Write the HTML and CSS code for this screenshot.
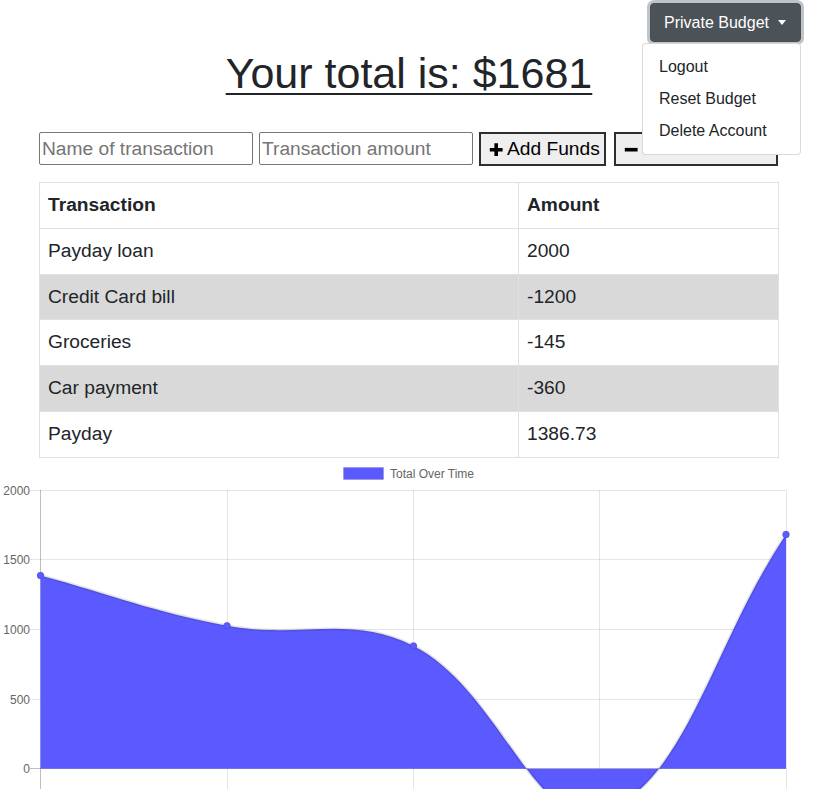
FILE: index.html
```html
<!DOCTYPE html>
<html lang="en">
<head>
<meta charset="utf-8">
<title>Budget Tracker</title>
<link rel="stylesheet" href="styles.css">
</head>
<body>
<nav class="navbar">
  <div class="dropdown">
    <button class="menu-btn" type="button">Private Budget<span class="caret"></span></button>
    <div class="dropdown-menu">
      <a class="dropdown-item" href="#">Logout</a>
      <a class="dropdown-item" href="#">Reset Budget</a>
      <a class="dropdown-item" href="#">Delete Account</a>
    </div>
  </div>
</nav>
<main class="container">
  <h1 class="total"><span class="total-text">Your total is: $1681</span></h1>
  <form class="entry">
    <input class="field" type="text" placeholder="Name of transaction">
    <input class="field" type="text" placeholder="Transaction amount">
    <button class="act-btn" type="button"><svg class="ico" viewBox="0 0 16 16"><path d="M7.4 2.3h3.6v4.6h4.6v3.6H11v4.6H7.4v-4.6H2.8V6.9h4.6z"/></svg>Add Funds</button>
    <button class="act-btn" type="button"><svg class="ico" viewBox="0 0 16 16"><path d="M2.8 6.9h12.8v3.6H2.8z"/></svg>Subtract Funds</button>
  </form>
  <table class="tx">
    <colgroup><col class="c1"><col class="c2"></colgroup>
    <thead>
      <tr><th>Transaction</th><th>Amount</th></tr>
    </thead>
    <tbody>
      <tr><td>Payday loan</td><td>2000</td></tr>
      <tr><td>Credit Card bill</td><td>-1200</td></tr>
      <tr><td>Groceries</td><td>-145</td></tr>
      <tr><td>Car payment</td><td>-360</td></tr>
      <tr><td>Payday</td><td>1386.73</td></tr>
    </tbody>
  </table>
</main>
<svg class="chart" width="819" height="331" viewBox="0 458 819 331">
  <rect x="343.5" y="467.5" width="40" height="12" fill="#5a5aff" stroke="rgba(0,0,0,0.1)"/>
  <text class="lbl" x="390" y="478">Total Over Time</text>
  <g stroke="rgba(0,0,0,0.1)" stroke-width="1">
    <line x1="30" y1="490.5" x2="786" y2="490.5"/>
    <line x1="30" y1="559.5" x2="786" y2="559.5"/>
    <line x1="30" y1="629.5" x2="786" y2="629.5"/>
    <line x1="30" y1="699.5" x2="786" y2="699.5"/>
    <line x1="227.5" y1="490" x2="227.5" y2="800"/>
    <line x1="413.5" y1="490" x2="413.5" y2="800"/>
    <line x1="599.5" y1="490" x2="599.5" y2="800"/>
    <line x1="786.5" y1="490" x2="786.5" y2="800"/>
  </g>
  <g stroke="rgba(0,0,0,0.25)" stroke-width="1">
    <line x1="40.5" y1="490" x2="40.5" y2="800"/>
    <line x1="30" y1="768.5" x2="786" y2="768.5"/>
  </g>
  <g class="lbl" text-anchor="end">
    <text x="30" y="494.5">2000</text>
    <text x="30" y="564">1500</text>
    <text x="30" y="634">1000</text>
    <text x="30" y="703.5">500</text>
    <text x="30" y="773">0</text>
  </g>
  <path d="M40.5,575.5 C115,595.6 151.2,611.5 227,625.7 C300.5,639.5 349.6,613.8 413.5,645.9 C498.8,688.6 536,832.2 599.5,813.2 C684.9,787.8 711.4,645.6 786,534.4 L786,768.8 L40.5,768.8 Z" fill="#5a5aff"/>
  <path d="M40.5,575.5 C115,595.6 151.2,611.5 227,625.7 C300.5,639.5 349.6,613.8 413.5,645.9 C498.8,688.6 536,832.2 599.5,813.2 C684.9,787.8 711.4,645.6 786,534.4" fill="none" stroke="rgba(0,0,0,0.1)" stroke-width="3"/>
  <g fill="#5a5aff" stroke="rgba(0,0,0,0.1)" stroke-width="1">
    <circle cx="40.5" cy="575.5" r="3.5"/>
    <circle cx="227" cy="625.7" r="3.5"/>
    <circle cx="413.5" cy="645.9" r="3.5"/>
    <circle cx="599.5" cy="813.2" r="3.5"/>
    <circle cx="786" cy="534.4" r="3.5"/>
  </g>
</svg>
</body>
</html>
```

FILE: styles.css
```css
html, body {
  margin: 0;
  padding: 0;
}

body {
  font-family: "Liberation Sans", Arial, Helvetica, sans-serif;
  color: #212529;
  background: #fff;
  overflow: hidden;
}

.navbar {
  display: flex;
  justify-content: flex-end;
  padding: 3px 18px 0 0;
  height: 39px;
}

.dropdown {
  position: relative;
}

.menu-btn {
  display: flex;
  align-items: center;
  height: 39px;
  padding: 0 14px 0 13px;
  background: #4b5258;
  color: #fff;
  border: 1px solid #474e54;
  border-radius: 4px;
  font-family: "Liberation Sans", Arial, sans-serif;
  font-size: 16px;
  box-shadow: 0 0 0 3px rgba(130, 138, 145, 0.5);
  cursor: pointer;
}

.caret {
  display: inline-block;
  margin-left: 9px;
  width: 0;
  height: 0;
  border-top: 5px solid #fff;
  border-left: 4.5px solid transparent;
  border-right: 4.5px solid transparent;
}

.dropdown-menu {
  position: absolute;
  right: 0;
  top: 40px;
  width: 157px;
  padding: 7px 0;
  background: #fff;
  border: 1px solid rgba(0, 0, 0, 0.15);
  border-radius: 4px;
  z-index: 10;
}

.dropdown-item {
  display: block;
  padding: 4px 16px;
  line-height: 24px;
  font-size: 16px;
  color: #212529;
  text-decoration: none;
  white-space: nowrap;
}

.container {
  width: 740px;
  margin: 0 0 0 39px;
}

.total {
  margin: 5px 0 0;
  font-size: 43px;
  font-weight: 400;
  line-height: 52px;
  text-align: center;
  color: #212529;
}

.total-text {
  text-decoration: underline;
  text-decoration-thickness: 2px;
  text-underline-offset: 5px;
}

.entry {
  display: flex;
  align-items: flex-start;
  margin: 33px 0 0;
}

.field {
  box-sizing: border-box;
  width: 214px;
  height: 33px;
  margin: 0 6px 0 0;
  padding: 1px 2px;
  border: 1px solid #767676;
  border-radius: 2px;
  font-family: "Liberation Sans", Arial, sans-serif;
  font-size: 19.2px;
  color: #212529;
  background: #fff;
}

.field::placeholder {
  color: #757575;
}

.act-btn {
  box-sizing: border-box;
  display: inline-flex;
  align-items: center;
  height: 34px;
  margin: 0 8px 0 0;
  padding: 0 4px 0 6px;
  border: 2px solid #2e2e2e;
  border-radius: 0;
  background: #efefef;
  font-family: "Liberation Sans", Arial, sans-serif;
  font-size: 19.2px;
  color: #000;
  white-space: nowrap;
}

.ico {
  width: 16px;
  height: 16px;
  margin-right: 4px;
  fill: #000;
}

.tx {
  width: 740px;
  margin-top: 16px;
  border-collapse: collapse;
  table-layout: fixed;
  font-size: 19.2px;
}

.c1 {
  width: 479px;
}

.tx th,
.tx td {
  border: 1px solid #dee2e6;
  padding: 8px;
  line-height: 28.8px;
  text-align: left;
  vertical-align: top;
}

.tx th {
  font-weight: 700;
}

.tx tbody tr:nth-child(even) {
  background: #d9d9d9;
}

.chart {
  display: block;
}

.lbl {
  font-family: "Liberation Sans", Arial, sans-serif;
  font-size: 12px;
  fill: #666;
}
```
